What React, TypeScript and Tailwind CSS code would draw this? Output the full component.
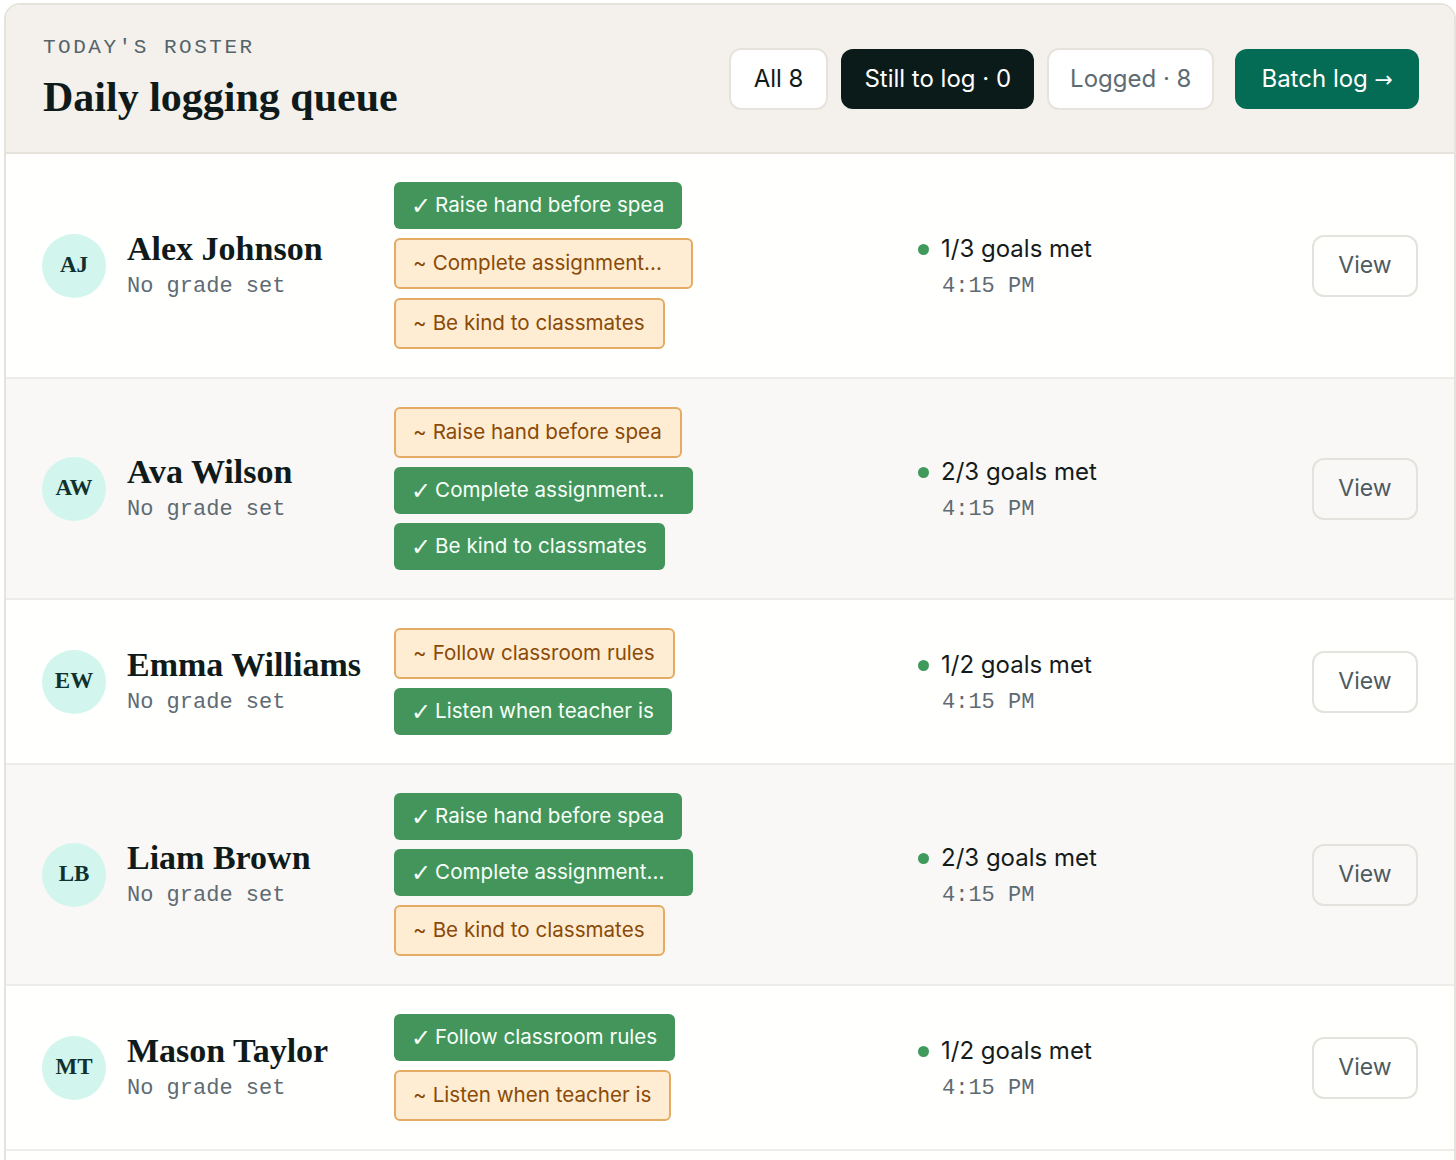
type Goal = { label: string; met: boolean; clipped?: boolean };

type Student = {
  initials: string;
  name: string;
  goals: Goal[];
  time: string;
};

const STUDENTS: Student[] = [
  {
    initials: "AJ",
    name: "Alex Johnson",
    time: "4:15 PM",
    goals: [
      { label: "Raise hand before spea", met: true },
      { label: "Complete assignment...", met: false, clipped: true },
      { label: "Be kind to classmates", met: false },
    ],
  },
  {
    initials: "AW",
    name: "Ava Wilson",
    time: "4:15 PM",
    goals: [
      { label: "Raise hand before spea", met: false },
      { label: "Complete assignment...", met: true, clipped: true },
      { label: "Be kind to classmates", met: true },
    ],
  },
  {
    initials: "EW",
    name: "Emma Williams",
    time: "4:15 PM",
    goals: [
      { label: "Follow classroom rules", met: false },
      { label: "Listen when teacher is", met: true },
    ],
  },
  {
    initials: "LB",
    name: "Liam Brown",
    time: "4:15 PM",
    goals: [
      { label: "Raise hand before spea", met: true },
      { label: "Complete assignment...", met: true, clipped: true },
      { label: "Be kind to classmates", met: false },
    ],
  },
  {
    initials: "MT",
    name: "Mason Taylor",
    time: "4:15 PM",
    goals: [
      { label: "Follow classroom rules", met: true },
      { label: "Listen when teacher is", met: false },
    ],
  },
];

const SANS = "font-['Inter',sans-serif]";
const SERIF = "font-['Liberation_Serif',serif]";
const MONO = "font-['Liberation_Mono',monospace]";

function GoalChip({ goal }: { goal: Goal }) {
  const width = goal.clipped ? "w-[299px]" : "";
  if (goal.met) {
    return (
      <span
        className={`${SANS} ${width} inline-flex self-start items-center rounded-md bg-[#43955b] pl-[17px] pr-[18px] h-[47px] text-[20.6px] text-[#f7fff9]`}
      >
        <span className="mr-[4px] font-['DejaVu_Sans',sans-serif] text-[24px] leading-none">✓</span>
        {goal.label}
      </span>
    );
  }
  return (
    <span
      className={`${SANS} ${width} inline-flex self-start items-center rounded-md border-2 border-[#e3ab63] bg-[#feedd3] pl-[17px] pr-[18px] h-[51px] text-[20.6px] text-[#8b4a07]`}
    >
      <span className="mr-[6px]">~</span>
      {goal.label}
    </span>
  );
}

function StudentRow({ student, shaded }: { student: Student; shaded: boolean }) {
  const met = student.goals.filter((g) => g.met).length;
  return (
    <div
      className={`flex items-center border-b-2 border-[#eeece8] pl-9 pr-9 py-7 ${
        shaded ? "bg-[#f9f8f6]" : "bg-[#fffffe]"
      }`}
    >
      {/* Avatar */}
      <div
        className={`${SERIF} flex h-16 w-16 shrink-0 items-center justify-center rounded-full bg-[#d2f5ed] text-[23px] font-bold text-[#10312d]`}
      >
        {student.initials}
      </div>

      {/* Name + grade */}
      <div className="ml-[21px] w-[267px] shrink-0 pt-[4px]">
        <div className={`${SERIF} text-[34px] font-bold leading-[38px] text-[#0f1b1a]`}>
          {student.name}
        </div>
        <div className={`${MONO} mt-[1px] text-[22px] leading-[36px] text-[#5e6b73]`}>
          No grade set
        </div>
      </div>

      {/* Goal chips */}
      <div className="flex w-[524px] shrink-0 flex-col gap-[9px]">
        {student.goals.map((g) => (
          <GoalChip key={g.label} goal={g} />
        ))}
      </div>

      {/* Status */}
      <div className="flex-1 pt-[5px]">
        <div className="flex items-center gap-3">
          <span className="h-[11px] w-[11px] rounded-full bg-[#3f9a5b]" />
          <span className={`${SANS} text-[24px] leading-[36px] text-[#141b1a]`}>
            {met}/{student.goals.length} goals met
          </span>
        </div>
        <div className={`${MONO} mt-[2px] pl-[24px] text-[22px] leading-[36px] text-[#5e6b73]`}>
          {student.time}
        </div>
      </div>

      <button
        type="button"
        className={`${SANS} h-[62px] w-[106px] rounded-xl border-2 border-[#e4e2dc] text-[23px] text-[#4e5a62]`}
      >
        View
      </button>
    </div>
  );
}

export default function App() {
  return (
    <div className="min-h-[1160px] bg-white pl-1 pt-[3px] flex flex-col">
      <div className="flex flex-1 flex-col overflow-hidden rounded-t-2xl border-2 border-b-0 border-[#e6e3dd] bg-[#fffffe]">
        {/* Header */}
        <div className="flex h-[149px] items-center justify-between border-b-2 border-[#e6e3dd] bg-[#f4f1ec] pl-[37px] pr-[35px]">
          <div>
            <div className={`${MONO} text-[21px] leading-[20px] tracking-[0.12em] text-[#55636b]`}>
              TODAY'S ROSTER
            </div>
            <h1 className={`${SERIF} mt-[16px] text-[42px] font-bold leading-[46px] text-[#0f1b1a]`}>
              Daily logging queue
            </h1>
          </div>

          <div className={`${SANS} flex items-center text-[24px]`}>
            <div className="flex items-center gap-[13px]">
              <button
                type="button"
                className="h-[62px] rounded-xl border-2 border-[#e6e3dd] bg-white px-[23px] text-[#0f1b1a]"
              >
                All 8
              </button>
              <button
                type="button"
                className="h-[60px] rounded-xl bg-[#0b1b1a] px-[23px] text-white"
              >
                Still to log · 0
              </button>
              <button
                type="button"
                className="h-[62px] rounded-xl border-2 border-[#e6e3dd] bg-white px-[21px] text-[#5e6b73]"
              >
                Logged · 8
              </button>
            </div>
            <button
              type="button"
              className="ml-[21px] h-[60px] rounded-xl bg-[#046b55] px-[26px] text-white"
            >
              Batch log <span className="font-['DejaVu_Sans',sans-serif] text-[22px]">→</span>
            </button>
          </div>
        </div>

        {STUDENTS.map((s, i) => (
          <StudentRow key={s.name} student={s} shaded={i % 2 === 1} />
        ))}
      </div>
    </div>
  );
}
